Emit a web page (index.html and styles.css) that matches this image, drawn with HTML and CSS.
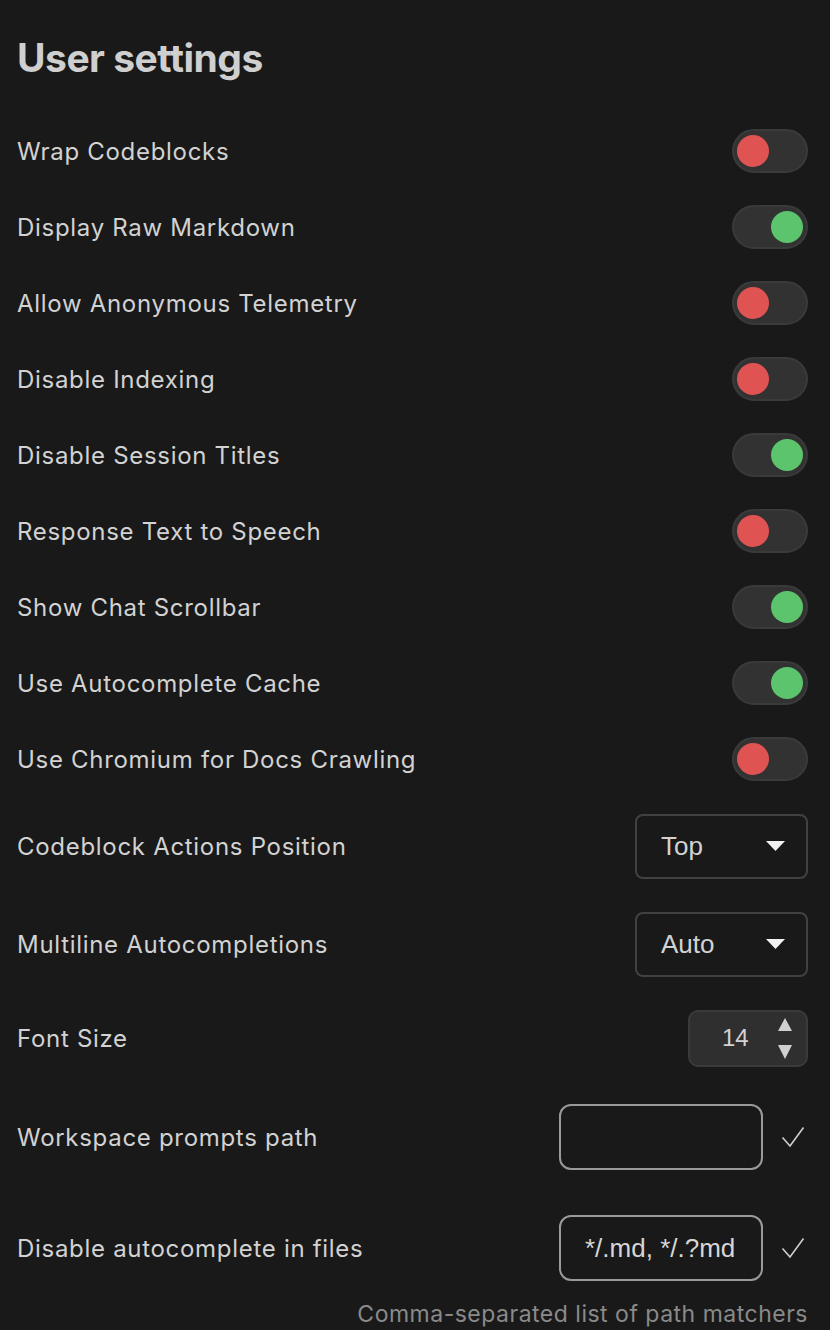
FILE: index.html
```html
<!DOCTYPE html>
<html>
<head>
<meta charset="utf-8">
<link rel="stylesheet" href="styles.css">
</head>
<body>
<div class="page">
  <h1 class="title">User settings</h1>

  <div class="row toggle-row"><span class="label">Wrap Codeblocks</span><span class="toggle off"><span class="knob"></span></span></div>
  <div class="row toggle-row"><span class="label">Display Raw Markdown</span><span class="toggle on"><span class="knob"></span></span></div>
  <div class="row toggle-row"><span class="label">Allow Anonymous Telemetry</span><span class="toggle off"><span class="knob"></span></span></div>
  <div class="row toggle-row"><span class="label">Disable Indexing</span><span class="toggle off"><span class="knob"></span></span></div>
  <div class="row toggle-row"><span class="label">Disable Session Titles</span><span class="toggle on"><span class="knob"></span></span></div>
  <div class="row toggle-row"><span class="label">Response Text to Speech</span><span class="toggle off"><span class="knob"></span></span></div>
  <div class="row toggle-row"><span class="label">Show Chat Scrollbar</span><span class="toggle on"><span class="knob"></span></span></div>
  <div class="row toggle-row"><span class="label">Use Autocomplete Cache</span><span class="toggle on"><span class="knob"></span></span></div>
  <div class="row toggle-row"><span class="label">Use Chromium for Docs Crawling</span><span class="toggle off"><span class="knob"></span></span></div>

  <div class="row select-row"><span class="label">Codeblock Actions Position</span>
    <div class="select"><span>Top</span><svg class="caret" width="19" height="10" viewBox="0 0 19 10"><path d="M0 0H19L9.5 10Z" fill="#f2f2f2"/></svg></div>
  </div>
  <div class="row select-row"><span class="label">Multiline Autocompletions</span>
    <div class="select"><span>Auto</span><svg class="caret" width="19" height="10" viewBox="0 0 19 10"><path d="M0 0H19L9.5 10Z" fill="#f2f2f2"/></svg></div>
  </div>

  <div class="row number-row"><span class="label">Font Size</span>
    <div class="number"><span class="num">14</span>
      <span class="spin">
        <svg width="14" height="13" viewBox="0 0 14 13"><path d="M7 0L14 13H0Z" fill="#d0d0d0"/></svg>
        <svg width="14" height="14" viewBox="0 0 14 14"><path d="M0 0H14L7 14Z" fill="#d0d0d0"/></svg>
      </span>
    </div>
  </div>

  <div class="row text-row first"><span class="label">Workspace prompts path</span>
    <div class="input-wrap"><div class="text-input"></div>
      <svg class="check" width="24" height="22" viewBox="0 0 24 22"><polyline points="1.5,11.5 9,20 22.5,1.5" fill="none" stroke="#cfcfcf" stroke-width="1.6"/></svg>
    </div>
  </div>
  <div class="row text-row second"><span class="label">Disable autocomplete in files</span>
    <div class="input-wrap"><div class="text-input">*/.md, */.?md</div>
      <svg class="check" width="24" height="22" viewBox="0 0 24 22"><polyline points="1.5,11.5 9,20 22.5,1.5" fill="none" stroke="#cfcfcf" stroke-width="1.6"/></svg>
    </div>
  </div>
  <div class="hint">Comma-separated list of path matchers</div>
</div>
</body>
</html>
```

FILE: styles.css
```css
html, body {
  margin: 0;
  padding: 0;
  background: #191919;
}
body {
  font-family: Inter, "Noto Sans", sans-serif;
  color: #d2d2d2;
}
.page {
  padding: 0 22px 0 17px;
  width: 830px;
  box-sizing: border-box;
}
.title {
  margin: 0;
  height: 113px;
  box-sizing: border-box;
  padding-top: 34px;
  font-size: 39px;
  line-height: 48px;
  font-weight: 700;
  letter-spacing: -0.5px;
  color: #cfcfcf;
}
.row {
  display: flex;
  align-items: center;
  justify-content: space-between;
}
.label {
  font-size: 24px;
  letter-spacing: 0.7px;
  color: #d2d2d2;
}
.toggle-row { height: 76px; }
.toggle {
  width: 76px;
  height: 44px;
  box-sizing: border-box;
  border-radius: 22px;
  background: #323232;
  border: 2px solid #3a3a3a;
  display: flex;
  align-items: center;
  padding: 0 3px;
}
.toggle.on { justify-content: flex-end; }
.knob {
  width: 32px;
  height: 32px;
  border-radius: 50%;
}
.toggle.off .knob { background: #e05353; }
.toggle.on .knob { background: #5cc46c; }

.select-row { height: 98px; }
.select {
  width: 173px;
  height: 65px;
  box-sizing: border-box;
  border: 2px solid #414141;
  border-radius: 8px;
  display: flex;
  align-items: center;
  justify-content: space-between;
  padding: 0 21px 0 24px;
  font-family: "Liberation Sans", Arial, sans-serif;
  font-size: 26px;
  color: #d2d2d2;
}

.number-row { height: 90px; }
.number {
  width: 120px;
  height: 57px;
  box-sizing: border-box;
  background: #2f2f2f;
  border: 2px solid #3a3a3a;
  border-radius: 10px;
  display: flex;
  align-items: center;
  padding: 0 14px 0 32px;
  justify-content: space-between;
  font-family: "Liberation Sans", Arial, sans-serif;
  font-size: 24px;
  color: #d2d2d2;
}
.spin {
  display: flex;
  flex-direction: column;
  gap: 14px;
}
.spin svg { display: block; }

.text-row.first { height: 108px; }
.text-row.second { height: 114px; }
.input-wrap {
  display: flex;
  align-items: center;
  gap: 18px;
}
.text-input {
  width: 204px;
  height: 66px;
  box-sizing: border-box;
  border: 2px solid #9a9a9a;
  border-radius: 12px;
  display: flex;
  align-items: center;
  padding-left: 24px;
  font-family: "Liberation Sans", Arial, sans-serif;
  font-size: 26px;
  color: #d6d6d6;
  white-space: nowrap;
  overflow: hidden;
}
.check { display: block; margin-right: 3px; }
.hint {
  text-align: right;
  font-size: 23px;
  letter-spacing: 0.5px;
  color: #8a8a8a;
  line-height: 26px;
  margin-top: -4px;
}
```
